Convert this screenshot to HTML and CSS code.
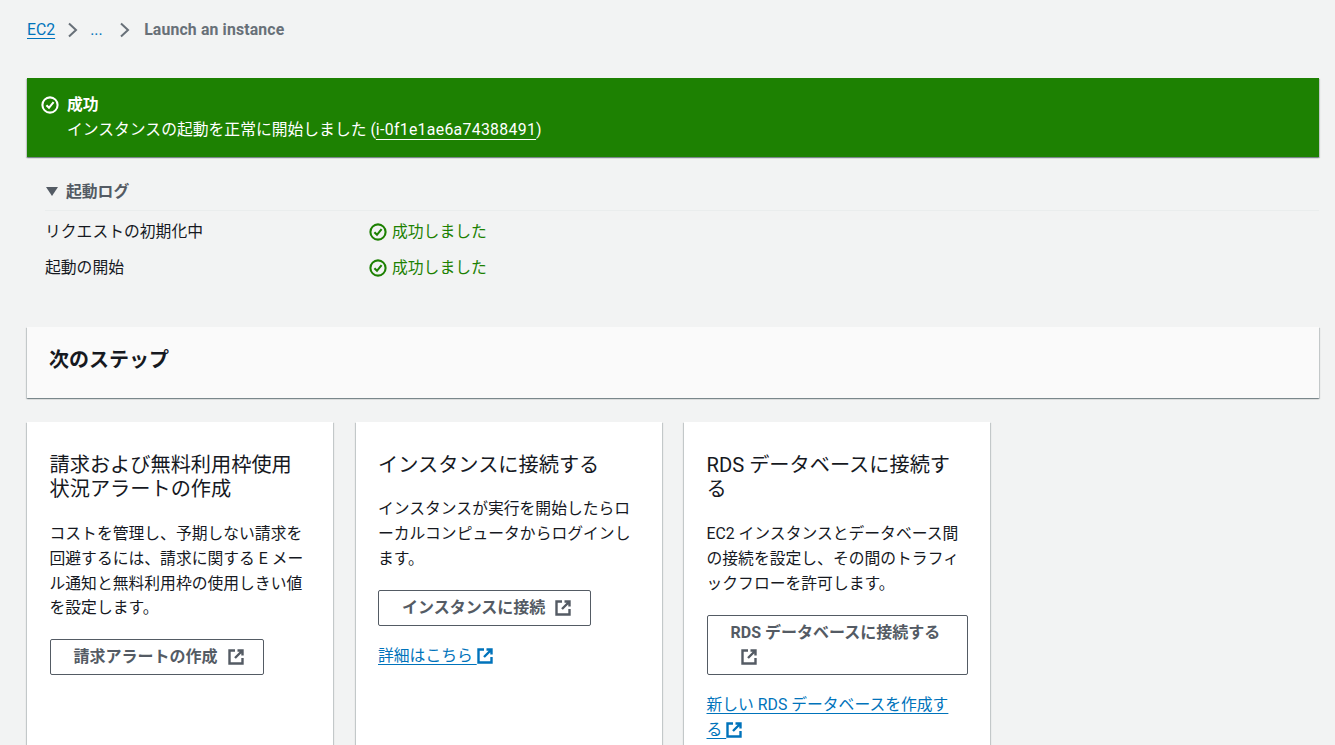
FILE: index.html
```html
<!DOCTYPE html>
<html lang="ja">
<head>
<meta charset="utf-8">
<title>Launch an instance</title>
<link rel="stylesheet" href="styles.css">
</head>
<body>
<svg class="defs" width="0" height="0" aria-hidden="true">
  <symbol id="ok" viewBox="0 0 18 18"><circle cx="9" cy="9" r="7.6" fill="none" stroke="currentColor" stroke-width="2.1"/><path d="M5.4 9.2 8 11.8 12.6 6.2" fill="none" stroke="currentColor" stroke-width="2.1"/></symbol>
  <symbol id="ext" viewBox="0 0 16 16"><path d="M7 1.5H1.5v13h13V9M9.5 1.5h5v5M14.5 1.5 7 9" fill="none" stroke="currentColor" stroke-width="2.4"/></symbol>
  <symbol id="chev" viewBox="0 0 12 16"><path d="M2 1.5 9 8 2 14.5" fill="none" stroke="currentColor" stroke-width="2"/></symbol>
</svg>
<main class="page">
  <nav class="crumbs">
    <a class="link" href="#">EC2</a>
    <svg class="chev"><use href="#chev"/></svg>
    <span class="dots">...</span>
    <svg class="chev"><use href="#chev"/></svg>
    <span class="current">Launch an instance</span>
  </nav>

  <section class="flash">
    <svg class="flash-icon"><use href="#ok"/></svg>
    <div>
      <div class="flash-title">成功</div>
      <div class="flash-text">インスタンスの起動を正常に開始しました (<a class="flash-link" href="#">i-0f1e1ae6a74388491</a>)</div>
    </div>
  </section>

  <section class="log">
    <div class="log-head"><span class="caret"></span><span>起動ログ</span></div>
    <div class="log-row"><span class="log-label">リクエストの初期化中</span><span class="status"><svg class="status-icon"><use href="#ok"/></svg>成功しました</span></div>
    <div class="log-row"><span class="log-label">起動の開始</span><span class="status"><svg class="status-icon"><use href="#ok"/></svg>成功しました</span></div>
  </section>

  <header class="panel"><h2>次のステップ</h2></header>

  <section class="cards">
    <article class="card">
      <h3>請求および無料利用枠使用状況アラートの作成</h3>
      <p>コストを管理し、予期しない請求を回避するには、請求に関する E メール通知と無料利用枠の使用しきい値を設定します。</p>
      <a class="btn" href="#">請求アラートの作成<svg class="ext"><use href="#ext"/></svg></a>
    </article>
    <article class="card">
      <h3>インスタンスに接続する</h3>
      <p>インスタンスが実行を開始したらローカルコンピュータからログインします。</p>
      <a class="btn" href="#">インスタンスに接続<svg class="ext"><use href="#ext"/></svg></a>
      <a class="link card-link" href="#">詳細はこちら <svg class="ext"><use href="#ext"/></svg></a>
    </article>
    <article class="card">
      <h3>RDS データベースに接続する</h3>
      <p>EC2 インスタンスとデータベース間の接続を設定し、その間のトラフィックフローを許可します。</p>
      <a class="btn" href="#">RDS データベースに接続する<svg class="ext"><use href="#ext"/></svg></a>
      <a class="link card-link" href="#">新しい RDS データベースを作成す<span class="keep">る <svg class="ext"><use href="#ext"/></svg></span></a>
    </article>
  </section>
</main>
</body>
</html>
```
FILE: styles.css
```css
* { box-sizing: border-box; }
html, body { margin: 0; height: 100%; overflow: hidden; }
body {
  background: #f2f3f3;
  color: #16191f;
  font-family: Roboto, "Noto Sans CJK JP", sans-serif;
  font-size: 15.8px;
  line-height: 20px;
}
.defs { position: absolute; }
.page { padding: 0 16px 0 27px; }
.link { color: #0073bb; text-decoration: underline; text-underline-offset: 3px; }
.keep { white-space: nowrap; }

.crumbs { display: flex; align-items: center; height: 60px; color: #545b64; }
.chev { width: 12px; height: 16px; margin: 0 12px; color: #687078; flex: none; }
.dots { color: #0073bb; width: 17px; margin-left: -1px; }
.current { font-weight: 700; color: #687078; margin-left: 1px; letter-spacing: .15px; }

.flash {
  display: flex;
  gap: 8px;
  margin-top: 18px;
  height: 79px;
  padding: 17px 14px 0;
  background: #1d8102;
  color: #fff;
  box-shadow: 0 1px 1px rgba(0, 28, 36, .3), 1px 1px 1px rgba(0, 28, 36, .15), -1px 1px 1px rgba(0, 28, 36, .15);
}
.flash-icon { width: 18px; height: 18px; margin-top: 1px; flex: none; }
.flash-title { font-weight: 700; line-height: 20px; }
.flash-text { line-height: 30px; }
.flash-link { color: #fff; text-decoration: underline; text-underline-offset: 4px; letter-spacing: .32px; }

.log { padding: 22px 0 0 18px; }
.log-head {
  display: flex; align-items: center; gap: 8px;
  height: 32px; padding-bottom: 6px; margin-bottom: 3px;
  font-weight: 700; color: #545b64;
  border-bottom: 1px solid #eaeded;
}
.caret { width: 0; height: 0; border-left: 6px solid transparent; border-right: 6px solid transparent; border-top: 9px solid #545b64; margin-left: 1px; }
.log-row { display: flex; align-items: center; height: 36px; }
.log-label { width: 324px; }
.status { display: flex; align-items: center; gap: 5px; color: #1d8102; }
.status-icon { width: 18px; height: 18px; }

.panel {
  margin-top: 41px;
  height: 71px;
  padding: 0 22px 5px;
  display: flex; align-items: center;
  background: #fafafa;
  box-shadow: 0 1px 1px rgba(0, 28, 36, .3), 1px 1px 1px rgba(0, 28, 36, .15), -1px 1px 1px rgba(0, 28, 36, .15);
}
.panel h2 { margin: 0; font-size: 20px; line-height: 25px; font-weight: 700; }

.cards { display: grid; grid-template-columns: repeat(3, 306px); column-gap: 22.5px; margin-top: 24px; }
.card {
  height: 400px;
  padding: 30.5px 22.5px;
  background: #fff;
  box-shadow: 0 1px 1px rgba(0, 28, 36, .3), 1px 1px 1px rgba(0, 28, 36, .15), -1px 1px 1px rgba(0, 28, 36, .15);
}
.card h3 { margin: 0; font-size: 20.2px; line-height: 24.6px; font-weight: 400; }
.card p { margin: 20px 0 0; line-height: 24.9px; }
.btn {
  display: block; width: fit-content;
  margin-top: 18.15px;
  padding: 5px 19px 4px 23px;
  border: 1px solid #545b64;
  border-radius: 2px;
  color: #545b64;
  font-size: 16px;
  font-weight: 700;
  line-height: 24.6px;
  text-decoration: none;
}
.ext { width: 16px; height: 16px; margin-left: 10px; vertical-align: -3px; }
.card-link { display: block; margin-top: 17.4px; line-height: 25px; }
.card-link .ext { margin-left: 0; }
```
